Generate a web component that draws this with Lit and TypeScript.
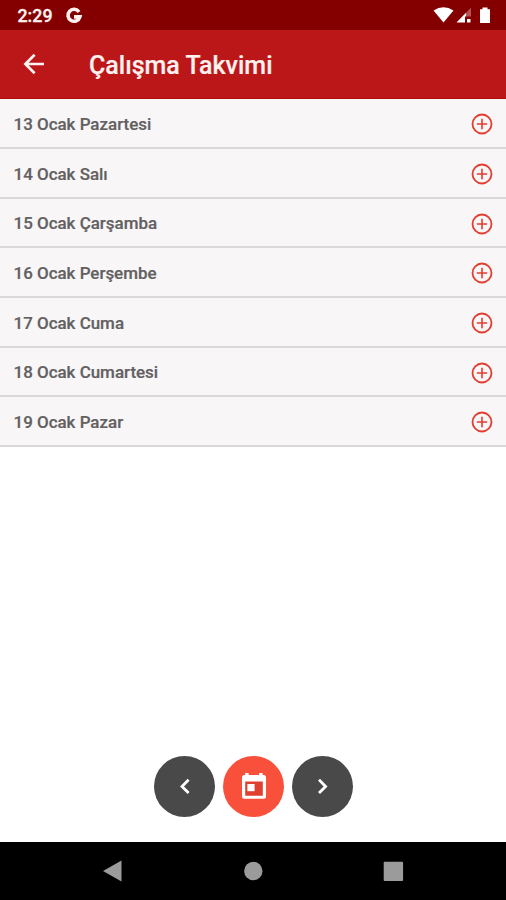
import { LitElement, html, svg, css } from "lit";
import { customElement, property } from "lit/decorators.js";

@customElement("day-row")
class DayRow extends LitElement {
  @property() label = "";
  static styles = css`
    :host { display: flex; align-items: center; justify-content: space-between; box-sizing: border-box;
      height: 49.67px; padding: 0 13px 0 13.5px; background: #f8f6f7; border-bottom: 2px solid #dad8d9; }
    .label { font-size: 16.95px; line-height: 24px; font-weight: 500; color: #626061; white-space: nowrap;
      -webkit-text-stroke: 0.2px #626061; padding-top: 2px; }
    svg { display: block; width: 22px; height: 22px; margin-top: 2.4px; }
  `;
  render() {
    return html`<span class="label">${this.label}</span>
      <svg viewBox="0 0 22 22" fill="none" stroke="#e23d30">
        <circle cx="11" cy="11" r="9.5" stroke-width="1.8" />
        <path d="M11 5.8V16.2M5.8 11H16.2" stroke-width="1.6" />
      </svg>`;
  }
}

@customElement("app-root")
class AppRoot extends LitElement {
  private days = ["13 Ocak Pazartesi", "14 Ocak Salı", "15 Ocak Çarşamba", "16 Ocak Perşembe",
    "17 Ocak Cuma", "18 Ocak Cumartesi", "19 Ocak Pazar"];

  static styles = css`
    :host { display: flex; flex-direction: column; width: 506px; height: 900px; overflow: hidden;
      background: #fff; font-family: Roboto, "Noto Sans", sans-serif; }
    svg { display: block; }
    .status { height: 30px; flex: none; box-sizing: border-box; padding: 1px 15px 0 17.5px; display: flex; align-items: center;
      background: #840000; color: #fff3f1; }
    .time { font-size: 17.8px; font-weight: 500; line-height: 20px; width: 47.5px; -webkit-text-stroke: 0.3px #fff3f1; }
    .icons { margin-left: auto; }
    .bar { height: 68.5px; flex: none; box-sizing: border-box; display: flex; align-items: center; padding-left: 20px;
      background: #bb1719; border-bottom: 1.5px solid #b00b0d; color: #fff1ef; }
    .title { margin-left: 41px; padding-top: 5px; font-size: 25px; line-height: 32px; font-weight: 500; white-space: nowrap;
      -webkit-text-stroke: 0.2px #fff1ef; }
    .list { flex: 1; padding-top: 0.8px; }
    .actions { display: flex; justify-content: center; gap: 7.4px; padding: 0 0 24.4px 1px; }
    .round { width: 61.6px; height: 61.6px; border-radius: 50%; background: #494949; display: grid; place-items: center; }
    .today { background: #f9503c; }
    .nav { height: 58.5px; flex: none; background: #000; display: grid; place-items: center; }
  `;

  private chevron(d: string) {
    return html`<div class="round"><svg width="24" height="24" viewBox="0 0 24 24" fill="none" stroke="#fff" stroke-width="2.8">${svg`<path d=${d} />`}</svg></div>`;
  }

  render() {
    return html`
      <div class="status">
        <span class="time">2:29</span>
        <svg width="18" height="18" viewBox="0 0 18 18" fill="none" stroke="#fff3f1" stroke-width="3.6">
          <path d="M14 4.9A6 6 0 1 0 14.8 9.9H9" />
        </svg>
        <svg class="icons" width="58" height="18" viewBox="0 0 58 18" fill="#fff">
          <path d="M0.5 3.5Q10.5 -2.8 20.5 3.5L10.5 15.5Z" />
          <path d="M23.5 15.5L33 5.7V9.6H32V15.5Z" />
          <path d="M33 5.7L38 0.8V9.6H33Z" fill="#b35555" />
          <path d="M34 12H37.5V15.5H34Z" />
          <path d="M49.5 0.5H54.5V2.2H57V16H47V2.2H49.5Z" />
        </svg>
      </div>
      <div class="bar">
        <svg width="28" height="28" viewBox="0 0 28 28" fill="none" stroke="#fff1ef" stroke-width="2.7">
          <path d="M24 14H5.5M14.6 4.8L5.4 14L14.6 23.2" />
        </svg>
        <span class="title">Çalışma Takvimi</span>
      </div>
      <div class="list">${this.days.map((d) => html`<day-row .label=${d}></day-row>`)}</div>
      <div class="actions">
        ${this.chevron("M15.6 5.8L9 12.4L15.6 19")}
        <div class="round today">
          <svg width="26" height="28" viewBox="0 0 26 28">
            <path fill="#e0402f" d="M3.5 8.5H22.5V24.5H3.5Z" />
            <path fill="#fff" fill-rule="evenodd" d="M3.5 3H4.2V1H7.6V3H18.2V1H21.6V3H22.5Q25 3 25 5.5V24.3Q25 26.8 22.5 26.8H3.5Q1 26.8 1 24.3V5.5Q1 3 3.5 3ZM4.2 9.6V23.8H21.8V9.6Z" />
            <path fill="#fff" d="M6.4 12H13.6V19.2H6.4Z" />
          </svg>
        </div>
        ${this.chevron("M9 5.8L15.6 12.4L9 19")}
      </div>
      <div class="nav">
        <svg width="506" height="58" viewBox="0 0 506 58" fill="#9b9b9b">
          <path d="M103 29L121.5 18.5V39.5Z" />
          <circle cx="253.3" cy="29" r="9.2" />
          <rect x="383.7" y="19.7" width="19.4" height="19.2" rx="1" />
        </svg>
      </div>`;
  }
}
